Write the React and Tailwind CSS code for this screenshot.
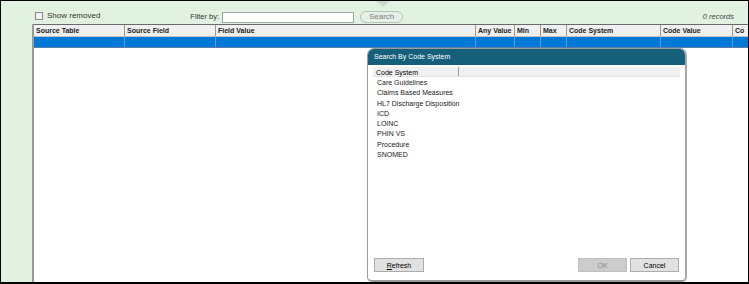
import React from 'react';

const cols = [
    { name: 'Source Table', w: 'w-[91px]' },
    { name: 'Source Field', w: 'w-[91px]' },
    { name: 'Field Value', w: 'w-[260px]' },
    { name: 'Any Value', w: 'w-[39px]' },
    { name: 'Min', w: 'w-[26px]' },
    { name: 'Max', w: 'w-[26px]' },
    { name: 'Code System', w: 'w-[94px]' },
    { name: 'Code Value', w: 'w-[72px]' },
    { name: 'Code', w: 'w-[20px]' },
];

const codeSystems = [
    'Care Guidelines',
    'Claims Based Measures',
    'HL7 Discharge Disposition',
    'ICD',
    'LOINC',
    'PHIN VS',
    'Procedure',
    'SNOMED',
];

const App = () => {
    return (
        <div className="relative w-[749px] h-[284px] overflow-hidden bg-[#e2f2e1] border border-black border-b-2 font-['Liberation_Sans',Arial,sans-serif] text-black">
            {/* notch above search */}
            <div className="absolute left-[375px] top-0 w-0 h-0 border-l-[7px] border-r-[7px] border-t-[6px] border-l-transparent border-r-transparent border-t-[#cfd8cf]" />

            {/* Toolbar */}
            <div className="h-[23px] flex items-end pb-[1px]">
                <div className="flex items-center ml-[34px] mb-[1px]">
                    <div className="w-[8px] h-[8px] border border-[#8a8a8a] bg-[#f4f4f4]" />
                    <span className="ml-[4px] text-[8px] text-[#333]">Show removed</span>
                </div>
                <div className="flex items-center ml-[90px]">
                    <span className="text-[7.5px] text-[#333]">Filter by:</span>
                    <div className="ml-[3px] w-[132px] h-[11px] bg-white border border-[#a5a5a5]" />
                    <button className="ml-[6px] w-[43px] h-[12px] rounded-full border border-[#b7c4b7] bg-[#e6f0e6] text-[8px] text-[#7d7d7d] leading-none">Search</button>
                </div>
                <span className="ml-auto mr-[14px] mb-[1px] text-[7.5px] italic text-[#444]">0 records</span>
            </div>

            {/* Grid */}
            <div className="ml-[31px] h-full border-l-2 border-[#9a9a9a] bg-white">
                <div className="flex h-[13px] bg-[#f0f0f0] border-t border-[#6a6a6a] border-b border-b-[#c0c0c0] overflow-hidden">
                    {cols.map((c, i) => (
                        <div key={i} className={`${c.w} shrink-0 border-r border-[#9a9a9a] pl-[2px] text-[7px] font-bold text-[#222] leading-[11px] whitespace-nowrap overflow-hidden`}>
                            {i === cols.length - 1 ? 'Co' : c.name}
                        </div>
                    ))}
                </div>
                <div className="flex h-[11px] bg-[#0078d7] border-b border-[#5a7fa6]">
                    {cols.map((c, i) => (
                        <div key={i} className={`${c.w} shrink-0 border-r border-[#5c9ad6]`} />
                    ))}
                </div>
            </div>

            {/* Dialog */}
            <div className="absolute left-[366px] top-[47px] w-[320px] h-[234px] flex flex-col rounded-t-[7px] rounded-b-[5px] bg-white border border-[#9c9c9c] border-r-2 border-b-2 border-r-[#a9a9a9] border-b-[#9a9a9a] overflow-hidden">
                <div className="h-[16px] bg-[#165f7a] flex items-center pl-[6px]">
                    <span className="text-[7px] text-white">Search By Code System</span>
                </div>
                <div className="mx-[5px] mt-[2px] h-[188px] bg-white">
                    <div className="h-[10px] bg-[#f0f0f0] flex border-b border-[#e2e2e2]">
                        <div className="w-[86px] border-r border-[#a0a0a0] pl-[3px] text-[7px] leading-[11px]">Code System</div>
                    </div>
                    <div className="pt-[1px] pl-[4px]">
                        {codeSystems.map((s, i) => (
                            <div key={i} className="h-[10.3px] text-[7px] leading-[10px] text-[#222]">{s}</div>
                        ))}
                    </div>
                </div>
                <div className="flex items-center mx-[6px] mt-[3px]">
                    <button className="w-[50px] h-[14px] bg-[#e1e1e1] border border-[#adadad] text-[7px] leading-none"><span className="underline">R</span>efresh</button>
                    <button className="ml-auto w-[49px] h-[14px] bg-[#cccccc] border border-[#bfbfbf] text-[7px] text-[#8a8a8a] leading-none">OK</button>
                    <button className="ml-[3px] w-[49px] h-[14px] bg-[#e1e1e1] border border-[#adadad] text-[7px] leading-none">Cancel</button>
                </div>
            </div>
        </div>
    );
};

export default App;
